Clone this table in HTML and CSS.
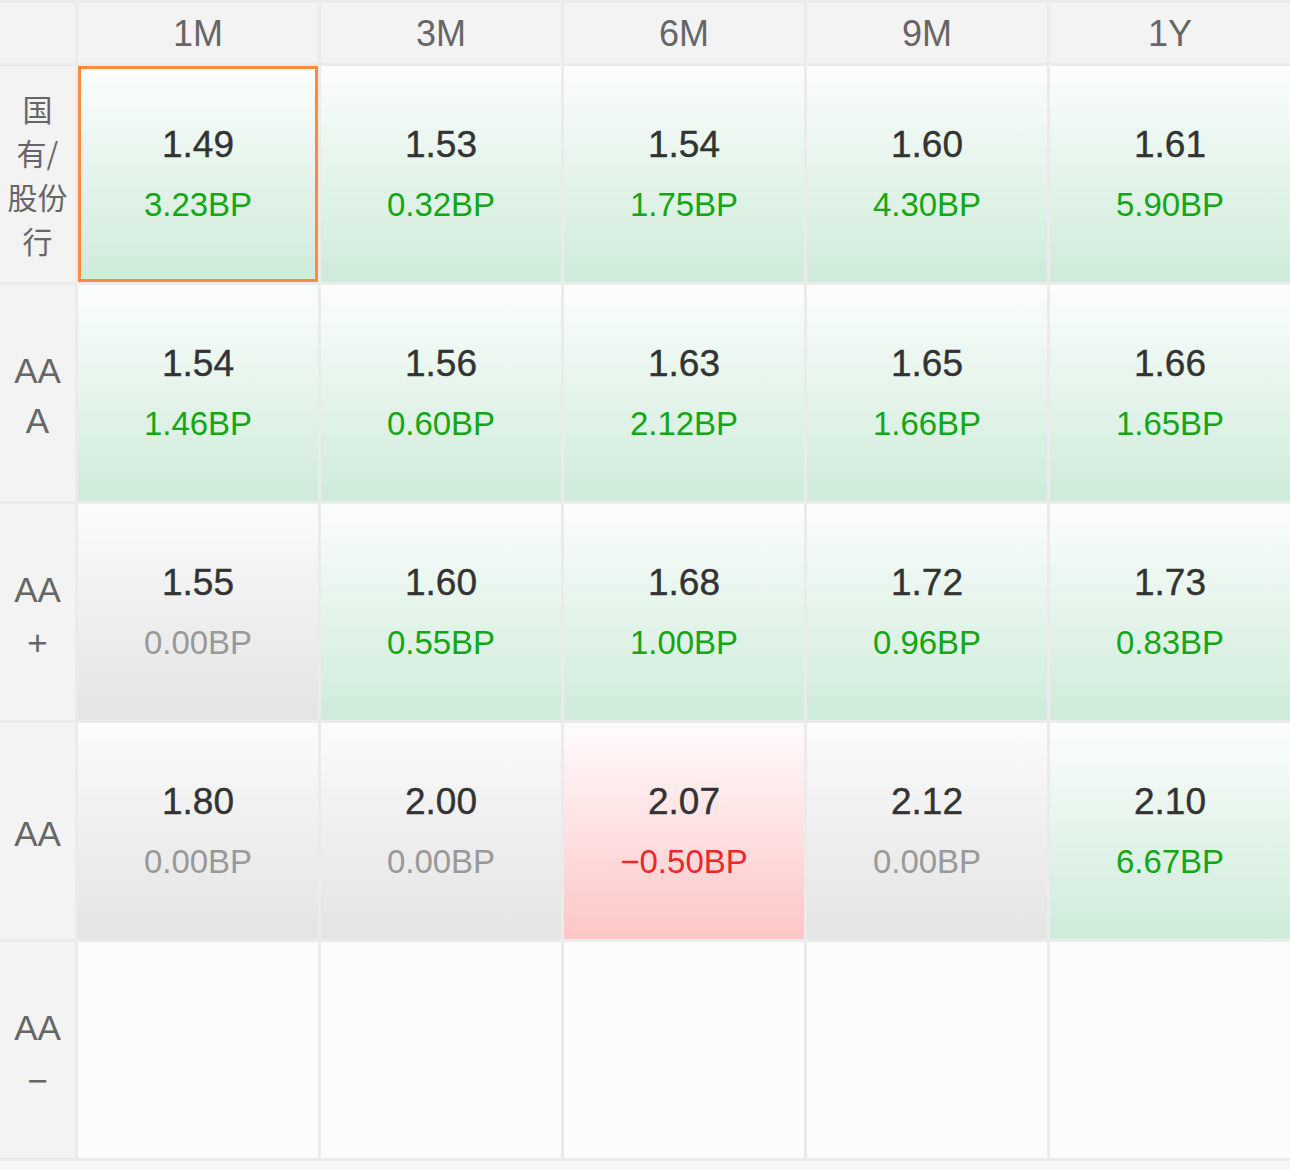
FILE: index.html
```html
<!DOCTYPE html>
<html lang="zh">
<head>
<meta charset="utf-8">
<title>Rate grid</title>
<link rel="stylesheet" href="styles.css">
</head>
<body>
<div class="grid">
  <div class="corner"></div>
  <div class="head">1M</div>
  <div class="head">3M</div>
  <div class="head">6M</div>
  <div class="head">9M</div>
  <div class="head">1Y</div>

  <div class="label cjk"><span>国</span><span>有/</span><span>股份</span><span>行</span></div>
  <div class="cell up selected"><span class="val">1.49</span><span class="bp">3.23BP</span></div>
  <div class="cell up"><span class="val">1.53</span><span class="bp">0.32BP</span></div>
  <div class="cell up"><span class="val">1.54</span><span class="bp">1.75BP</span></div>
  <div class="cell up"><span class="val">1.60</span><span class="bp">4.30BP</span></div>
  <div class="cell up"><span class="val">1.61</span><span class="bp">5.90BP</span></div>

  <div class="label"><span>AA</span><span>A</span></div>
  <div class="cell up"><span class="val">1.54</span><span class="bp">1.46BP</span></div>
  <div class="cell up"><span class="val">1.56</span><span class="bp">0.60BP</span></div>
  <div class="cell up"><span class="val">1.63</span><span class="bp">2.12BP</span></div>
  <div class="cell up"><span class="val">1.65</span><span class="bp">1.66BP</span></div>
  <div class="cell up"><span class="val">1.66</span><span class="bp">1.65BP</span></div>

  <div class="label sign"><span>AA</span><span>+</span></div>
  <div class="cell flat"><span class="val">1.55</span><span class="bp">0.00BP</span></div>
  <div class="cell up"><span class="val">1.60</span><span class="bp">0.55BP</span></div>
  <div class="cell up"><span class="val">1.68</span><span class="bp">1.00BP</span></div>
  <div class="cell up"><span class="val">1.72</span><span class="bp">0.96BP</span></div>
  <div class="cell up"><span class="val">1.73</span><span class="bp">0.83BP</span></div>

  <div class="label"><span>AA</span></div>
  <div class="cell flat"><span class="val">1.80</span><span class="bp">0.00BP</span></div>
  <div class="cell flat"><span class="val">2.00</span><span class="bp">0.00BP</span></div>
  <div class="cell down"><span class="val">2.07</span><span class="bp">−0.50BP</span></div>
  <div class="cell flat"><span class="val">2.12</span><span class="bp">0.00BP</span></div>
  <div class="cell up"><span class="val">2.10</span><span class="bp">6.67BP</span></div>

  <div class="label sign"><span>AA</span><span>−</span></div>
  <div class="cell empty"></div>
  <div class="cell empty"></div>
  <div class="cell empty"></div>
  <div class="cell empty"></div>
  <div class="cell empty"></div>
</div>
</body>
</html>
```

FILE: styles.css
```css
html, body {
  margin: 0;
  padding: 0;
}
body {
  background: #f6f7f9;
  font-family: "Liberation Sans", Arial, "Noto Sans CJK SC", sans-serif;
  width: 1290px;
  height: 1170px;
  overflow: hidden;
}
.grid {
  display: grid;
  grid-template-columns: 75px repeat(5, 1fr);
  grid-template-rows: 60px repeat(5, 216px);
  gap: 3px;
  padding: 3px 0;
  background: #ebebeb;
  width: 1290px;
  box-sizing: border-box;
}
.corner, .head, .label {
  background: #f3f3f3;
}
.head {
  display: flex;
  align-items: center;
  justify-content: center;
  padding-top: 2px;
  box-sizing: border-box;
  font-size: 36px;
  color: #666;
}
.label {
  display: flex;
  flex-direction: column;
  align-items: center;
  justify-content: center;
  font-size: 35px;
  line-height: 50px;
  color: #666;
  padding-top: 5px;
  box-sizing: border-box;
}
.label.sign {
  line-height: 53px;
  padding-top: 7px;
}
.label.cjk {
  font-family: "Noto Sans CJK SC", "Liberation Sans", sans-serif;
  font-size: 30px;
  line-height: 44px;
  padding-top: 0;
}
.cell {
  display: flex;
  flex-direction: column;
  align-items: center;
  justify-content: center;
  box-sizing: border-box;
  padding-top: 2px;
}
.cell.up {
  background: linear-gradient(to bottom, #fcfdfc 0%, #e9f6ee 40%, #cfebda 100%);
}
.cell.flat {
  background: linear-gradient(to bottom, #fcfcfc 0%, #f1f1f1 40%, #e4e4e4 100%);
}
.cell.down {
  background: linear-gradient(to bottom, #fefbfc 0%, #fee6e7 40%, #fdc6c6 100%);
}
.cell.empty {
  background: #fcfcfc;
}
.cell.selected {
  border: 3px solid #ff8a3d;
}
.val {
  font-size: 37px;
  line-height: 58px;
  color: #333;
  -webkit-text-stroke: 0.4px #333;
}
.bp {
  font-size: 33px;
  line-height: 58px;
  padding-top: 2px;
}
.up .bp {
  color: #15a615;
}
.flat .bp {
  color: #999;
}
.down .bp {
  color: #f0262a;
}
```
